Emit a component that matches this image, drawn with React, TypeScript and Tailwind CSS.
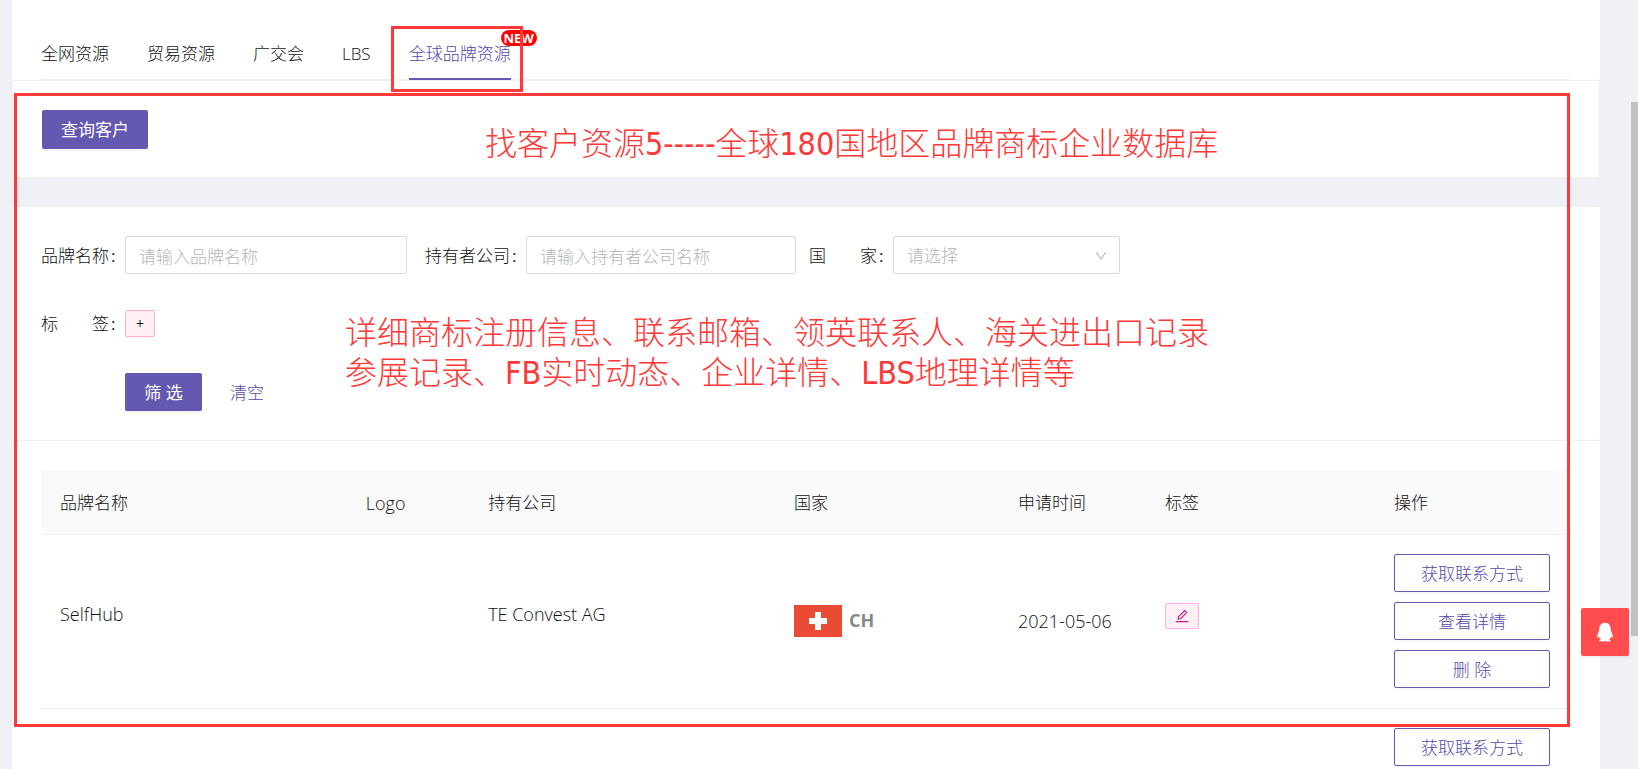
import { AiOutlineDown, AiOutlineEdit, AiOutlineQq } from "react-icons/ai";

const tabs = ["全网资源", "贸易资源", "广交会", "LBS", "全球品牌资源"];

const columns = [
  { title: "品牌名称", width: "w-[20%]" },
  { title: "Logo", width: "w-[8%]" },
  { title: "持有公司", width: "w-[20%]" },
  { title: "国家", width: "w-[224px]" },
  { title: "申请时间", width: "w-[147px]" },
  { title: "标签", width: "w-[229px]" },
  { title: "操作", width: "w-[196px]" },
];

function OutlineButton({ children }: { children: string }) {
  return (
    <button className="block h-[38px] w-[156px] rounded-[2px] border border-[#6459b1] bg-white pt-[2px] text-[#5548ab] shadow-[0_2px_0_rgba(0,0,0,0.03)]">
      {children}
    </button>
  );
}

function Actions({ labels }: { labels: string[] }) {
  return (
    <div className="flex flex-col gap-[10px]">
      {labels.map((label) => (
        <OutlineButton key={label}>{label}</OutlineButton>
      ))}
    </div>
  );
}

function SwissFlag() {
  return (
    <svg width="48" height="32" viewBox="0 0 48 32" aria-label="CH">
      <rect width="48" height="32" fill="#ea4b35" />
      <path d="M21 7h6v6h6v6h-6v6h-6v-6h-6v-6h6z" fill="#fff" />
    </svg>
  );
}

function Tabs() {
  return (
    <div className="rounded-b-[2px] bg-white px-[29px] pt-[37px]">
      <nav className="flex gap-[38px] border-b border-[#f0f0f0]">
        {tabs.map((tab) =>
          tab === "全球品牌资源" ? (
            <a
              key={tab}
              href="#brand"
              className="relative -mb-px h-[43px] border-b-2 border-[#6459b1] leading-[34px] text-[#5548ab]"
            >
              {tab}
              <span className="absolute -top-[7px] left-[92px] flex h-4 w-9 items-center justify-center rounded-full bg-[#ff0000] text-[13px] font-bold text-white">
                NEW
              </span>
              <span className="absolute -top-[11px] -left-[18px] h-[66px] w-[132px] border-[3px] border-[#ff3838]" />
            </a>
          ) : (
            <a key={tab} href="#tab" className="h-[42px] leading-[34px]">
              {tab}
            </a>
          )
        )}
      </nav>
    </div>
  );
}

function Filters() {
  return (
    <form className="rounded-[2px] bg-white px-[29px] py-[29px]">
      <div className="flex items-center">
        <label htmlFor="brand" className="w-[84px] pt-[2px]">
          品牌名称<span className="pl-[2px] font-normal">:</span>
        </label>
        <input
          id="brand"
          placeholder="请输入品牌名称"
          className="h-[38px] w-[282px] rounded-[2px] border border-[#d9d9d9] px-[13px] pt-[2px] placeholder:text-[#b5b5b5]"
        />
        <label htmlFor="holder" className="ml-[18px] w-[101px] pt-[2px]">
          持有者公司<span className="pl-[2px] font-normal">:</span>
        </label>
        <input
          id="holder"
          placeholder="请输入持有者公司名称"
          className="h-[38px] w-[270px] rounded-[2px] border border-[#d9d9d9] px-[13px] pt-[2px] placeholder:text-[#b5b5b5]"
        />
        <label htmlFor="country" className="ml-[13px] w-[84px] pt-[2px] whitespace-nowrap">
          国　　家<span className="pl-[2px] font-normal">:</span>
        </label>
        <div className="relative">
          <select
            id="country"
            className="h-[38px] w-[227px] appearance-none rounded-[2px] border border-[#d9d9d9] bg-white px-[13px] pt-[2px] text-[#b5b5b5]"
          >
            <option>请选择</option>
          </select>
          <AiOutlineDown className="pointer-events-none absolute top-[13px] right-3 text-[14px] text-[#b5b5b5]" />
        </div>
      </div>
      <div className="mt-9 flex items-center">
        <label htmlFor="add-tag" className="w-[84px]">
          标　　签<span className="pl-[2px] font-normal">:</span>
        </label>
        <button
          id="add-tag"
          type="button"
          className="h-[27px] w-[30px] rounded-[2px] border border-[#ffadd2] bg-[#fff0f6] text-[14px] leading-[24px] font-normal"
        >
          +
        </button>
      </div>
      <div className="mt-9 flex items-center pl-[84px]">
        <button
          type="button"
          className="h-[38px] w-[77px] rounded-[2px] bg-[#6459b1] pt-[2px] font-normal text-white shadow-[0_2px_0_rgba(0,0,0,0.045)]"
        >
          筛 选
        </button>
        <button type="button" className="ml-[28px] pt-[2px] text-[#5548ab]">
          清空
        </button>
      </div>
    </form>
  );
}

function BrandTable() {
  return (
    <div className="mt-px rounded-[2px] bg-white px-[29px] pt-[29px]">
      <table className="w-full table-fixed border-collapse text-left">
        <thead>
          <tr className="h-[64px] border-b border-[#f0f0f0] bg-[#fafafa]">
            {columns.map((c) => (
              <th
                key={c.title}
                className={`px-[19px] pt-[3px] font-light ${c.title === "Logo" ? "text-lg" : ""} ${c.width}`}
              >
                {c.title}
              </th>
            ))}
          </tr>
        </thead>
        <tbody>
          <tr className="border-b border-[#f0f0f0]">
            <td className="px-[19px] pb-[14px] text-lg">SelfHub</td>
            <td />
            <td className="px-[19px] pb-[14px] text-lg">TE Convest AG</td>
            <td className="px-[19px]">
              <div className="flex items-center gap-[7px]">
                <SwissFlag />
                <span className="pb-[2px] text-lg font-bold text-[#888888]">CH</span>
              </div>
            </td>
            <td className="px-[19px] text-lg">2021-05-06</td>
            <td className="px-[19px] pb-[10px]">
              <button
                aria-label="编辑标签"
                className="flex h-[26px] w-[34px] items-center justify-center rounded-[2px] border border-[#ffadd2] bg-[#fff0f6] text-[16px] text-[#c41d7f]"
              >
                <AiOutlineEdit />
              </button>
            </td>
            <td className="px-[19px] pt-[19px] pb-[20px]">
              <Actions labels={["获取联系方式", "查看详情", "删 除"]} />
            </td>
          </tr>
          <tr className="border-b border-[#f0f0f0]">
            <td colSpan={6} />
            <td className="px-[19px] pt-[19px] pb-[20px]">
              <Actions labels={["获取联系方式"]} />
            </td>
          </tr>
        </tbody>
      </table>
    </div>
  );
}

export default function App() {
  return (
    <div className="flex h-screen overflow-hidden bg-[#f0f1f6] font-['Open_Sans','Noto_Sans_CJK_SC',sans-serif] text-[17px] leading-[26px] font-light text-[#111111]">
      <main className="relative min-w-0 flex-1 pr-[31px] pl-3">
        <Tabs />
        <section className="rounded-[2px] border border-[#f0f0f0] bg-white px-[29px] pt-[29px] pb-[28px]">
          <button className="h-[39px] w-[106px] rounded-[2px] bg-[#6459b1] font-normal text-white shadow-[0_2px_0_rgba(0,0,0,0.045)]">
            查询客户
          </button>
        </section>
        <div className="mt-[29px]">
          <Filters />
          <BrandTable />
        </div>

        <div className="pointer-events-none absolute top-[93px] right-[61px] left-[14px] h-[634px] border-[3px] border-[#ff3838]" />
        <p className="pointer-events-none absolute top-[124px] left-[485px] font-['DejaVu_Sans_Condensed','Noto_Sans_CJK_SC',sans-serif] text-[32px] leading-[40px] whitespace-nowrap text-[#ff3838]">
          找客户资源5-----全球180国地区品牌商标企业数据库
        </p>
        <p className="pointer-events-none absolute top-[313px] left-[345px] font-['DejaVu_Sans_Condensed','Noto_Sans_CJK_SC',sans-serif] text-[32px] leading-[40px] whitespace-nowrap text-[#ff3838]">
          详细商标注册信息、联系邮箱、领英联系人、海关进出口记录
          <br />
          参展记录、FB实时动态、企业详情、LBS地理详情等
        </p>
        <button
          aria-label="QQ"
          className="absolute top-[608px] right-[2px] flex h-12 w-12 items-center justify-center rounded-[2px] bg-[#ff4d4f] text-[24px] text-white shadow-[0_2px_0_rgba(0,0,0,0.045)]"
        >
          <AiOutlineQq />
        </button>
      </main>
      <div className="w-[7px] bg-[#f1f1f1] pt-[102px]">
        <div className="h-[534px] bg-[#c1c1c1]" />
      </div>
    </div>
  );
}
